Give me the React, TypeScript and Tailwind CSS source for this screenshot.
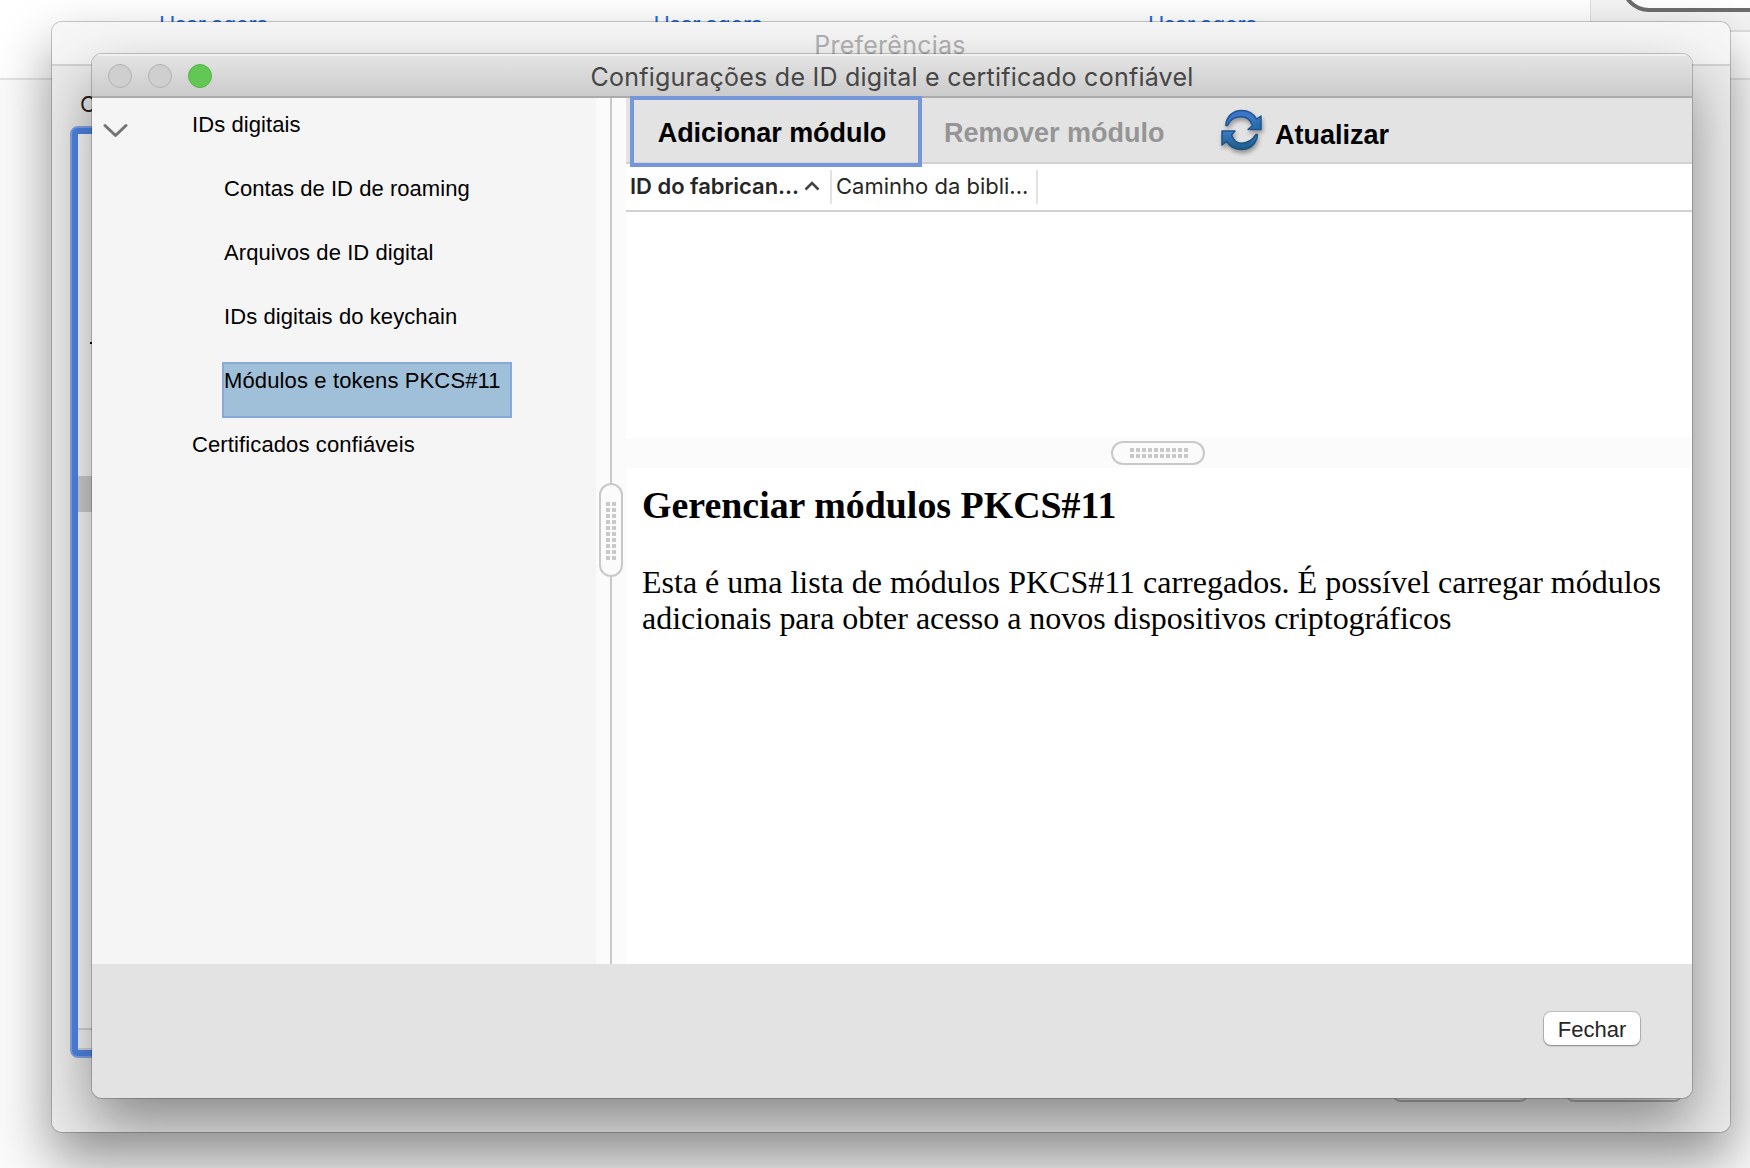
import React from "react";

const sans = "font-['Liberation_Sans',Arial,sans-serif]";
const ui = "font-['Inter',sans-serif]";

function Dots({ className }: { className: string }) {
  return (
    <div className={className}>
      {Array.from({ length: 20 }, (_, i) => (
        <span key={i} className="size-1 bg-[#c9c9c9]" />
      ))}
    </div>
  );
}

function BrowserPage() {
  return (
    <div className="flex h-full w-full flex-col bg-[#fbfbfb]">
      <div className="flex h-[80px] border-b-2 border-[#e4e4e4] bg-white">
        <div className={`flex min-w-0 flex-1 pl-[159px] pt-[10px] text-[22px] leading-7 text-[#1f69e0] ${ui}`}>
          {["a", "b", "c"].map((k) => (
            <a key={k} className="w-[494.5px] shrink-0 tracking-[-0.55px]">Usar agora</a>
          ))}
        </div>
        <div className="h-8 w-[160px] shrink-0 overflow-hidden border-b-2 border-l border-[#dfdfdf] bg-[#f4f4f4] pl-[30px]">
          <div className="-mt-12 h-[60px] w-[200px] rounded-[28px] border-4 border-[#6d6d6d] bg-white" />
        </div>
      </div>
    </div>
  );
}

function PreferencesWindow() {
  return (
    <div className="absolute left-[52px] top-[22px] flex h-[1110px] w-[1678px] flex-col overflow-hidden rounded-[10px] bg-[#ececec]">
      <div className={`h-[44px] shrink-0 border-b-2 border-[#d2d2d2] bg-[#f6f6f6] pt-[7px] pr-[2px] text-center text-[25px] leading-8 text-[#b2b2b2] ${ui}`}>
        <span className="tracking-[0.26px]">Preferências</span>
      </div>
      <div className="flex flex-1 flex-col pl-[18px]">
        <div className={`h-[60px] pl-[10px] pt-[24px] text-[22px] leading-7 text-[#222] ${ui}`}>Categorias:</div>
        <div className="flex h-[932px] w-[420px] flex-col rounded-[8px] border-2 border-[#86a6e8]">
          <div className="flex flex-1 flex-col rounded-[5px] border-[6px] border-[#5088ea] bg-white">
            <div className="mt-[208px] ml-[12px] h-[2px] w-3 bg-black" />
            <div className="mt-[132px] h-9 bg-[#d4d4d4]" />
            <div className="mt-auto h-[22px] border-y-2 border-[#dadada] bg-[#fafafa]" />
          </div>
        </div>
        <div className="mt-[10px] flex gap-[38px] pl-[1323px]">
          <div className="h-[34px] w-[135px] rounded-[8px] border-b-2 border-[#b0b0b0] bg-[#f4f4f4]" />
          <div className="h-[34px] w-[116px] rounded-[8px] border-b-2 border-[#b0b0b0] bg-[#f4f4f4]" />
        </div>
      </div>
    </div>
  );
}

function Refresh() {
  return (
    <svg width="46" height="46" viewBox="0 0 46 46" className="shrink-0 drop-shadow-[1px_3px_2px_rgba(0,0,0,0.35)]">
      <defs>
        <linearGradient id="top" x1="0" y1="0" x2="1" y2="1">
          <stop offset="0" stopColor="#3e6fd0" />
          <stop offset="0.55" stopColor="#3a79c4" />
          <stop offset="1" stopColor="#1f66a4" />
        </linearGradient>
        <linearGradient id="bottom" x1="0" y1="0" x2="0" y2="1">
          <stop offset="0" stopColor="#3d7bcb" />
          <stop offset="1" stopColor="#1c5c86" />
        </linearGradient>
      </defs>
      <path d="M4.800 17.500C5.200 8.500 12 2.500 20.500 2.500C27.500 2.500 32.500 5.500 35.500 11L40 8V21.500H27L31.500 17.500C29.500 12 25.500 8.800 20 8.800C13.500 8.800 9 11.500 6.500 17.500Z" fill="url(#top)" stroke="#1f5690" strokeWidth="1.500" strokeLinejoin="round" />
      <path d="M36.500 26.500C36 35.500 29 41.500 20.500 41.500C14 41.500 9 38.800 5.800 33.500L1 37V23H14L10.500 27C12.500 32.500 15.500 35.200 20.500 35.200C27 35.200 31.500 32 35 26.500Z" fill="url(#bottom)" stroke="#1c5480" strokeWidth="1.500" strokeLinejoin="round" />
    </svg>
  );
}

function TitleBar() {
  return (
    <div className="relative flex h-[44px] shrink-0 items-center gap-4 border-b-2 border-[#ababab] bg-linear-to-b from-[#e5e5e5] to-[#cbcbcb] pl-4 shadow-[inset_0_2px_0_#f0f0f0]">
      <span className="mt-[2px] size-6 rounded-full border border-[#b2b2b2] bg-[#cfcfcf]" />
      <span className="mt-[2px] size-6 rounded-full border border-[#b2b2b2] bg-[#cfcfcf]" />
      <span className="mt-[2px] size-6 rounded-full border border-[#55b348] bg-[#62c755]" />
      <h1 className={`absolute inset-x-0 top-[7px] text-center text-[25px] leading-8 text-[#464646] ${ui}`}>
        <span className="tracking-[0.24px]">Configurações de ID digital e certificado confiável</span>
      </h1>
    </div>
  );
}

function Sidebar() {
  return (
    <nav className={`flex w-[504px] shrink-0 flex-col bg-[#f5f5f5] text-[22px] leading-[26px] text-black ${sans}`}>
      <div className="flex h-16 pt-[14px]">
        <svg width="26" height="16" viewBox="0 0 26 16" className="ml-[11px] mt-[11px]">
          <path d="M2 2.500L12.500 12.500L23 2.500" fill="none" stroke="#747474" strokeWidth="3" strokeLinecap="round" strokeLinejoin="round" />
        </svg>
        <span className="ml-[63px] tracking-[0.08px]">IDs digitais</span>
      </div>
      <div className="h-16 pl-[132px] pt-[14px] tracking-[0.05px]">Contas de ID de roaming</div>
      <div className="h-16 pl-[132px] pt-[14px] tracking-[0.07px]">Arquivos de ID digital</div>
      <div className="h-16 pl-[132px] pt-[14px] tracking-[0.09px]">IDs digitais do keychain</div>
      <div className="h-16 pl-[130px] pt-2">
        <div className="h-[56px] w-[290px] border-2 border-[#87a9d9] bg-[#a0bfd8] pt-1 tracking-[0.13px] whitespace-nowrap">
          Módulos e tokens PKCS#11
        </div>
      </div>
      <div className="h-16 pl-[100px] pt-[14px] tracking-[0.12px]">Certificados confiáveis</div>
    </nav>
  );
}

function VerticalSplitter() {
  return (
    <div className="flex w-[30px] shrink-0 flex-col items-center bg-[#fbfbfb]">
      <div className="h-[385px] w-[2px] bg-[#c9c9c9]" />
      <div className="flex h-[94px] w-6 items-center justify-center rounded-full border-2 border-[#c9c9c9] pt-[2px]">
        <Dots className="grid grid-cols-2 gap-[2px]" />
      </div>
      <div className="w-[2px] flex-1 bg-[#c9c9c9]" />
    </div>
  );
}

function Main() {
  return (
    <main className="flex flex-1 flex-col bg-white">
      <div className={`flex h-[66px] shrink-0 border-b-2 border-[#d2d2d2] bg-[#e3e3e3] pl-1 text-[27px] leading-8 font-bold whitespace-nowrap ${sans}`}>
        <button className="relative z-10 -mt-[2px] h-[71px] w-[292px] shrink-0 border-4 border-[#7597d9] pt-[2px] pr-[8px] text-center tracking-[-0.06px] text-black">
          Adicionar módulo
        </button>
        <span className="ml-[22px] mt-[19px] w-[221px] text-[#959595]">Remover módulo</span>
        <span className="ml-[56px] mt-[10px]"><Refresh /></span>
        <span className="ml-[8px] mt-[21px] text-black">Atualizar</span>
      </div>
      <div className={`flex h-[48px] shrink-0 border-b-2 border-[#d2d2d2] pt-[6px] text-[22px] leading-8 text-[#262626] ${ui}`}>
        <div className="flex h-[34px] w-[206px] border-r-2 border-[#e2e2e2] pl-1 font-semibold whitespace-nowrap">
          <span className="w-[170px] tracking-[-0.03px]">ID do fabrican...</span>
          <svg width="16" height="12" viewBox="0 0 16 12" className="ml-1 mt-[10px]">
            <path d="M1.500 9.500L8 3L14.500 9.500" fill="none" stroke="#444" strokeWidth="2.600" />
          </svg>
        </div>
        <div className="h-[34px] w-[206px] border-r-2 border-[#e2e2e2] pl-1 whitespace-nowrap">
          Caminho da bibli...
        </div>
      </div>
      <div className="h-[226px] shrink-0" />
      <div className="flex h-[30px] shrink-0 items-center justify-center bg-[#fbfbfb] pr-[2px]">
        <div className="flex h-6 w-[94px] items-center justify-center rounded-full border-2 border-[#c9c9c9] pl-[2px]">
          <Dots className="grid grid-cols-10 gap-[2px]" />
        </div>
      </div>
      <article className="pl-4 pr-4 font-['Liberation_Serif',serif] text-[32px] leading-9 whitespace-nowrap text-black">
        <h2 className="pt-[16px] text-[37.900px] leading-[42px] font-bold">Gerenciar módulos PKCS#11</h2>
        <p className="pt-[38px]">
          Esta é uma lista de módulos PKCS#11 carregados. É possível carregar módulos
          <br />
          <span className="tracking-[-0.03px]">adicionais para obter acesso a novos dispositivos criptográficos</span>
        </p>
      </article>
    </main>
  );
}

export default function App() {
  return (
    <div className="relative h-[1168px] w-[1750px] overflow-hidden">
      <BrowserPage />
      <div className="absolute left-[52px] top-[22px] h-[1110px] w-[1678px] rounded-[10px] shadow-[0_0_0_1px_rgba(0,0,0,0.2),0_28px_56px_rgba(0,0,0,0.44)]" />
      <PreferencesWindow />
      <div className="absolute left-[52px] top-[22px] h-[1110px] w-[1678px] overflow-hidden rounded-[10px]">
        <div className="ml-[40px] mt-[32px] h-[1044px] w-[1600px] rounded-[10px] shadow-[0_0_0_1px_rgba(0,0,0,0.2),0_28px_60px_rgba(0,0,0,0.42)]" />
      </div>
      <div className="absolute left-[92px] top-[54px] flex h-[1044px] w-[1600px] flex-col overflow-hidden rounded-[10px] bg-[#e3e3e3]">
        <TitleBar />
        <div className="flex h-[866px] shrink-0">
          <Sidebar />
          <VerticalSplitter />
          <Main />
        </div>
        <footer className="flex justify-end pr-[52px] pt-12">
          <button className={`h-[33px] w-[96px] rounded-[7px] bg-white pt-[3px] text-[22px] leading-7 text-[#262626] shadow-[0_0_0_1px_rgba(0,0,0,0.16),0_1px_2px_rgba(0,0,0,0.3)] ${sans}`}>
            Fechar
          </button>
        </footer>
      </div>
    </div>
  );
}
